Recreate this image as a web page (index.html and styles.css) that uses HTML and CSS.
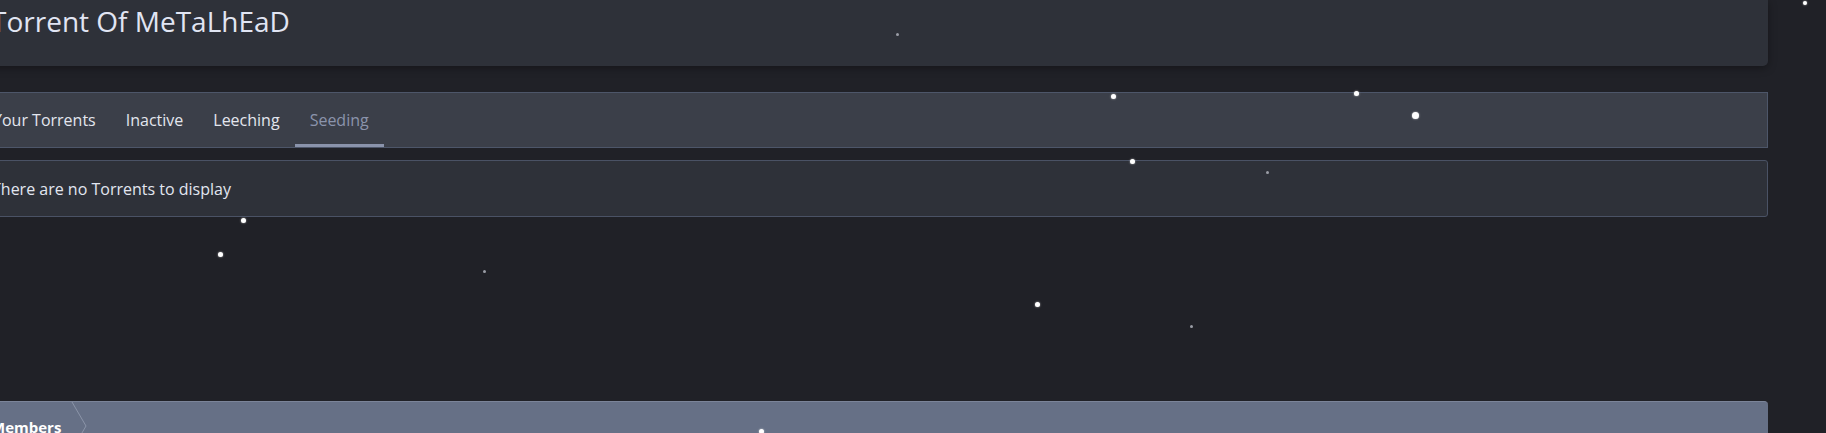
FILE: index.html
```html
<!DOCTYPE html>
<html lang="en">
<head>
  <meta charset="UTF-8" />
  <title>Torrent Of MeTaLhEaD</title>
  <link rel="stylesheet" href="styles.css">
</head>
<body>
  <div class="page">
    <!-- Profile header -->
    <div class="header">
      <h1 class="title">Torrent Of MeTaLhEaD</h1>
    </div>

    <!-- Torrent tabs -->
    <div class="tabs">
      <a class="tab">Your Torrents</a>
      <a class="tab">Inactive</a>
      <a class="tab">Leeching</a>
      <a class="tab active">Seeding</a>
    </div>

    <div class="message">There are no Torrents to display</div>

    <!-- Members block -->
    <div class="block-head">
      <span class="crumb">Members
        <svg class="crumb-arrow" width="22" height="40" viewBox="0 0 22 40">
          <path d="M2 0 L16 24 L2 48" fill="none" stroke="#8b94a8" stroke-width="1"/>
        </svg>
      </span>
    </div>
  </div>

  <!-- falling snow -->
  <div class="snow">
    <i class="flake f1"></i>
    <i class="flake f2"></i>
    <i class="flake f3 big"></i>
    <i class="flake f4"></i>
    <i class="flake f5"></i>
    <i class="flake f6"></i>
    <i class="flake f7"></i>
    <i class="flake f8"></i>
    <i class="flake f9"></i>
    <i class="flake f10 tiny"></i>
    <i class="flake f11 tiny"></i>
    <i class="flake f12 tiny"></i>
    <i class="flake f13 tiny"></i>
  </div>
</body>
</html>
```

FILE: styles.css
```css
html, body {
  margin: 0;
  padding: 0;
  background: #202127;
  font-family: 'Open Sans', 'Noto Sans', sans-serif;
  color: #e2e6f0;
  overflow: hidden;
  height: 100%;
}

.page {
  width: 1793px;
  margin-left: -25px;
}

.header {
  height: 66px;
  box-sizing: border-box;
  padding: 5px 16px 0;
  background: #2e3139;
  border-radius: 0 0 5px 5px;
  box-shadow: 0 2px 8px rgba(0, 0, 0, 0.35);
}

.title {
  margin: 0;
  font-size: 28px;
  font-weight: 400;
  line-height: 1.2;
  color: #e1e5f3;
}

.tabs {
  display: flex;
  margin-top: 26px;
  height: 56px;
  box-sizing: border-box;
  padding-left: 2px;
  background: #3b3f49;
  border: 1px solid #4d5669;
}

.tab {
  display: flex;
  align-items: center;
  box-sizing: border-box;
  height: 54px;
  padding: 3px 15px 0;
  font-size: 16px;
  color: #e3e6ee;
  border-bottom: 3px solid transparent;
  cursor: pointer;
}

.tab.active {
  color: #8b94ac;
  border-bottom-color: #8a93ab;
}

.message {
  margin-top: 12px;
  height: 57px;
  box-sizing: border-box;
  display: flex;
  align-items: center;
  padding: 1px 16px 0;
  font-size: 16px;
  background: #2e3139;
  border: 1px solid #4a5265;
  border-radius: 3px;
}

.block-head {
  margin-top: 184px;
  height: 40px;
  background: #667086;
  border-top: 1px solid #7b8499;
  border-radius: 0 4px 0 0;
}

.crumb {
  position: relative;
  display: inline-block;
  padding: 15px 0 0 16px;
  font-size: 15px;
  font-weight: 700;
  color: #ffffff;
}

.crumb-arrow {
  position: absolute;
  top: 0;
  right: -31px;
}

.snow {
  position: fixed;
  left: 0;
  top: 0;
  width: 100%;
  height: 100%;
  pointer-events: none;
}

.flake {
  position: absolute;
  width: 5px;
  height: 5px;
  margin: -2px 0 0 -2px;
  border-radius: 50%;
  background: #fff;
  box-shadow: 0 0 2px rgba(255, 255, 255, 0.7);
}

.flake.big {
  width: 7px;
  height: 7px;
  margin: -3px 0 0 -3px;
}

.flake.tiny {
  width: 3px;
  height: 3px;
  margin: -1px 0 0 -1px;
  background: #9a9da6;
  box-shadow: none;
}

.f1 { left: 1113px; top: 96px; }
.f2 { left: 1356px; top: 93px; }
.f3 { left: 1415px; top: 115px; }
.f4 { left: 1132px; top: 161px; }
.f5 { left: 243px; top: 220px; }
.f6 { left: 220px; top: 254px; }
.f7 { left: 1037px; top: 304px; }
.f8 { left: 761px; top: 431px; }
.f9 { left: 1805px; top: 3px; width: 4px; height: 4px; }
.f10 { left: 897px; top: 34px; }
.f11 { left: 1267px; top: 172px; }
.f12 { left: 484px; top: 271px; }
.f13 { left: 1191px; top: 326px; }
```
